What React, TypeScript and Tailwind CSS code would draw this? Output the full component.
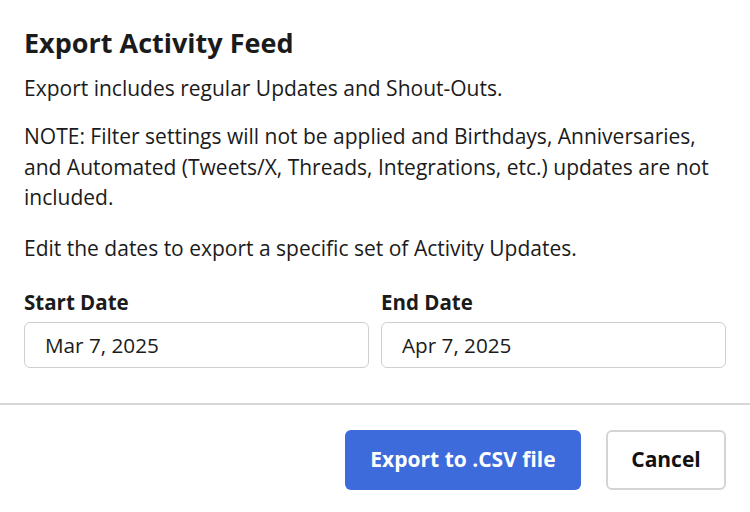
import React from 'react';

function DateField({ label, value }: { label: string; value: string }) {
  return (
    <div className="flex flex-col">
      <label className="text-[20.5px] leading-6 font-bold text-[#1b1b1b]">{label}</label>
      <input
        type="text"
        defaultValue={value}
        className="mt-2 h-[46px] w-full rounded-md border border-[#cfcfcf] bg-white px-5 text-[20.7px] text-[#1b1b1b] outline-none"
      />
    </div>
  );
}

export default function App() {
  return (
    <div className="w-[750px] h-[512px] bg-white text-[#1b1b1b]" style={{ fontFamily: '"Open Sans", sans-serif' }}>
      <div className="px-6 pt-[27px]">
        <h2 className="text-[27px] leading-8 font-bold">Export Activity Feed</h2>
        <p className="mt-[14px] text-[21px] leading-[31px]">Export includes regular Updates and Shout-Outs.</p>
        <p className="mt-[17px] text-[21px] leading-[30.5px]">
          NOTE: Filter settings will not be applied and Birthdays, Anniversaries, and Automated (Tweets/X, Threads,
          Integrations, etc.) updates are not included.
        </p>
        <p className="mt-5 text-[21px] leading-[31px]">Edit the dates to export a specific set of Activity Updates.</p>
        <div className="mt-[26px] grid grid-cols-2 gap-3">
          <DateField label="Start Date" value="Mar 7, 2025" />
          <DateField label="End Date" value="Apr 7, 2025" />
        </div>
      </div>
      <div className="mt-[35px] border-t-2 border-[#d6d6d6]" />
      <div className="flex justify-end gap-[25px] px-6 pt-[25px]">
        <button className="h-[60px] w-[236px] rounded-md bg-[#3d6bdb] text-[21px] font-bold text-white">
          Export to .CSV file
        </button>
        <button className="h-[60px] w-[120px] rounded-md border-2 border-[#d4d4d4] bg-white text-[21px] font-bold text-[#111]">
          Cancel
        </button>
      </div>
    </div>
  );
}
